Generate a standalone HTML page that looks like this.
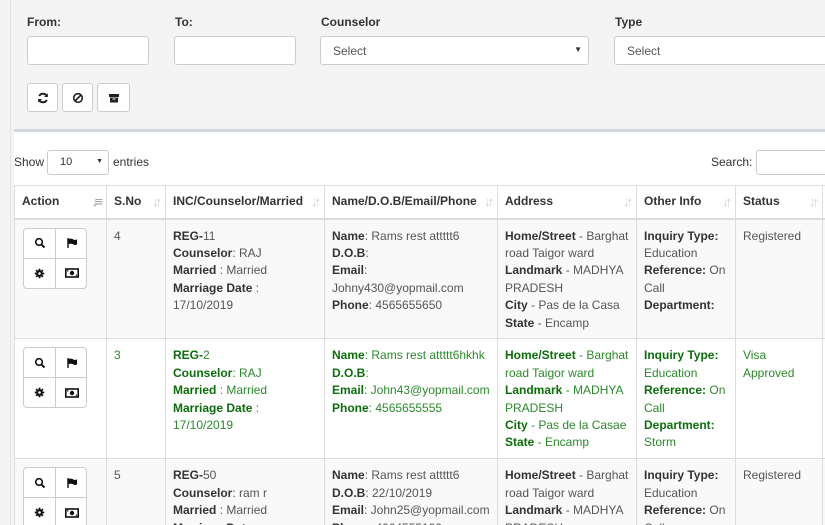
<!DOCTYPE html>
<html><head><meta charset="utf-8"><style>
*{box-sizing:border-box;margin:0;padding:0}
html,body{width:825px;height:525px;overflow:hidden}
body{background:#f4f4f4;font-family:"Liberation Sans",Arial,sans-serif;font-size:12px;color:#333;position:relative}
.lbl{position:absolute;top:15px;font-weight:bold;font-size:12px;color:#333}
.inp{position:absolute;top:36px;height:29px;background:#fff;border:1px solid #ccc;border-radius:3px;font-size:12px;color:#555;padding:7px 0 0 12px}
.btn{position:absolute;top:83px;height:29px;background:#fff;border:1px solid #ccc;border-radius:3px;display:flex;align-items:center;justify-content:center}
.panel{position:absolute;left:14px;top:129px;width:811px;height:396px;background:#fff;border-top:3px solid #d2d6de}
.leftline{position:absolute;left:10px;top:0;width:1px;height:525px;background:#e3e3e3}
.wrap{position:absolute;left:0;top:0;width:825px;height:525px;overflow:hidden}
table{position:absolute;left:14px;top:185px;border-collapse:collapse;table-layout:fixed;width:820px}
td,th{border:1px solid #ddd;vertical-align:top;text-align:left;line-height:17.4px;padding:8px 7px 6.5px}
th{height:33px;padding:7px 7px;font-weight:bold;border-bottom:2px solid #ddd;position:relative}
th .s{position:absolute;right:6px;top:7px;color:#ccc;font-size:13px;letter-spacing:-3px}
tr.o td{background:#f9f9f9}
td{color:#555}
td b{color:#333}
tr.g td{color:#2a8a2a}
tr.g td b{color:#0b6e0b}
.ag{display:grid;grid-template-columns:32px 32px;grid-template-rows:30px 29px;width:64px;margin-left:1px;border-radius:4px;border:1px solid #ccc;overflow:hidden;background:#fff}
.ag span{display:flex;align-items:center;justify-content:center}
.ag span:nth-child(odd){border-right:1px solid #ccc}
.ag span:nth-child(-n+2){border-bottom:1px solid #ccc}
</style></head><body>
<div class="wrap">
<div class="leftline"></div>
<div class="lbl" style="left:27px">From:</div>
<div class="lbl" style="left:175px">To:</div>
<div class="lbl" style="left:321px">Counselor</div>
<div class="lbl" style="left:615px">Type</div>
<div class="inp" style="left:27px;width:122px"></div>
<div class="inp" style="left:174px;width:122px"></div>
<div class="inp" style="left:320px;width:269px">Select<span style="position:absolute;right:6px;top:8px;font-size:8px;color:#333">▼</span></div>
<div class="inp" style="left:614px;width:220px">Select</div>
<div class="btn" style="left:27px;width:31px"><svg width="12" height="12" viewBox="0 0 12 12"><path d="M10 4.5A4.3 4.3 0 0 0 2.2 4M2 7.5A4.3 4.3 0 0 0 9.8 8" stroke="#222" stroke-width="2" fill="none"/><path d="M10.8 1.2V5H7z M1.2 10.8V7H5z" fill="#222"/></svg></div>
<div class="btn" style="left:62px;width:31px"><svg width="12" height="12" viewBox="0 0 12 12"><circle cx="6" cy="6" r="4.3" stroke="#222" stroke-width="1.6" fill="none"/><path d="M3 9L9 3" stroke="#222" stroke-width="1.6"/></svg></div>
<div class="btn" style="left:97px;width:33px"><svg width="12" height="12" viewBox="0 0 12 12"><rect x="1" y="2" width="10" height="3" fill="#222"/><rect x="2" y="5.5" width="8" height="5" fill="#222"/><rect x="4.5" y="6.5" width="3" height="1" fill="#fff"/></svg></div>
<div class="panel"></div>
<div style="position:absolute;left:14px;top:155px;color:#333">Show</div>
<div style="position:absolute;left:47px;top:150px;width:62px;height:25px;border:1px solid #ccc;border-radius:3px;background:#fff;font-size:11px;padding:5px 0 0 12px">10<span style="position:absolute;right:5px;top:7px;font-size:7px">▼</span></div>
<div style="position:absolute;left:113px;top:155px;color:#333">entries</div>
<div style="position:absolute;left:711px;top:155px;color:#333">Search:</div>
<div style="position:absolute;left:756px;top:150px;width:80px;height:25px;border:1px solid #ccc;border-radius:3px;background:#fff"></div>
<svg width="0" height="0" style="position:absolute"><defs>
<symbol id="q" viewBox="0 0 12 12"><circle cx="5" cy="5" r="3.3" stroke="#111" stroke-width="1.6" fill="none"/><path d="M7.4 7.4L10.5 10.5" stroke="#111" stroke-width="2"/></symbol>
<symbol id="f" viewBox="0 0 12 12"><path d="M2 1V11" stroke="#111" stroke-width="1.4"/><path d="M2.5 2Q5 1 7 2.3T11 2.3V7.5Q9 8.5 7 7.3T2.5 7.3z" fill="#111"/></symbol>
<symbol id="c" viewBox="0 0 12 12"><circle cx="6" cy="6" r="3.6" fill="#111"/><path d="M6 0.8V11.2M0.8 6H11.2M2.3 2.3L9.7 9.7M9.7 2.3L2.3 9.7" stroke="#111" stroke-width="2"/><circle cx="6" cy="6" r="1.4" fill="#fff"/></symbol>
<symbol id="m" viewBox="0 0 14 10"><rect x="0.8" y="1" width="12.4" height="8" fill="none" stroke="#111" stroke-width="1.6"/><circle cx="7" cy="5" r="2.2" fill="#111"/><rect x="2" y="2.2" width="1.3" height="1.3" fill="#111"/><rect x="10.7" y="6.5" width="1.3" height="1.3" fill="#111"/></symbol>
</defs></svg>
<table>
<colgroup><col style="width:92px"><col style="width:59px"><col style="width:159px"><col style="width:173px"><col style="width:139px"><col style="width:99px"><col style="width:87px"><col style="width:12px"></colgroup>
<tr><th>Action<span class="s" style="color:#999">↓≡</span></th><th>S.No<span class="s">↓↑</span></th><th>INC/Counselor/Married<span class="s">↓↑</span></th><th>Name/D.O.B/Email/Phone<span class="s">↓↑</span></th><th>Address<span class="s">↓↑</span></th><th>Other Info<span class="s">↓↑</span></th><th>Status<span class="s">↓↑</span></th><th></th></tr>
<tr class="o"><td><div class="ag"><span><svg width="12" height="12"><use href="#q"/></svg></span><span><svg width="12" height="12"><use href="#f"/></svg></span><span><svg width="11" height="11"><use href="#c"/></svg></span><span><svg width="14" height="10"><use href="#m"/></svg></span></div></td><td>4</td><td><b>REG-</b>11<br><b>Counselor</b>: RAJ<br><b>Married</b> : Married<br><b>Marriage Date</b> :<br>17/10/2019</td><td><b>Name</b>: Rams rest attttt6<br><b>D.O.B</b>:<br><b>Email</b>:<br>Johny430@yopmail.com<br><b>Phone</b>: 4565655650</td><td><b>Home/Street</b> - Barghat road Taigor ward<br><b>Landmark</b> - MADHYA PRADESH<br><b>City</b> - Pas de la Casa<br><b>State</b> - Encamp</td><td><b>Inquiry Type:</b> Education<br><b>Reference:</b> On Call<br><b>Department:</b></td><td>Registered</td><td></td></tr>
<tr class="g"><td><div class="ag"><span><svg width="12" height="12"><use href="#q"/></svg></span><span><svg width="12" height="12"><use href="#f"/></svg></span><span><svg width="11" height="11"><use href="#c"/></svg></span><span><svg width="14" height="10"><use href="#m"/></svg></span></div></td><td>3</td><td><b>REG-</b>2<br><b>Counselor</b>: RAJ<br><b>Married</b> : Married<br><b>Marriage Date</b> :<br>17/10/2019</td><td><b>Name</b>: Rams rest attttt6hkhk<br><b>D.O.B</b>:<br><b>Email</b>: John43@yopmail.com<br><b>Phone</b>: 4565655555</td><td><b>Home/Street</b> - Barghat road Taigor ward<br><b>Landmark</b> - MADHYA PRADESH<br><b>City</b> - Pas de la Casae<br><b>State</b> - Encamp</td><td><b>Inquiry Type:</b> Education<br><b>Reference:</b> On Call<br><b>Department:</b> Storm</td><td>Visa Approved</td><td></td></tr>
<tr class="o"><td><div class="ag"><span><svg width="12" height="12"><use href="#q"/></svg></span><span><svg width="12" height="12"><use href="#f"/></svg></span><span><svg width="11" height="11"><use href="#c"/></svg></span><span><svg width="14" height="10"><use href="#m"/></svg></span></div></td><td>5</td><td><b>REG-</b>50<br><b>Counselor</b>: ram r<br><b>Married</b> : Married<br><b>Marriage Date</b> :</td><td><b>Name</b>: Rams rest attttt6<br><b>D.O.B</b>: 22/10/2019<br><b>Email</b>: John25@yopmail.com<br><b>Phone</b>: 4064555199</td><td><b>Home/Street</b> - Barghat road Taigor ward<br><b>Landmark</b> - MADHYA PRADESH</td><td><b>Inquiry Type:</b> Education<br><b>Reference:</b> On Call</td><td>Registered</td><td></td></tr>
</table>
</div>
</body></html>
